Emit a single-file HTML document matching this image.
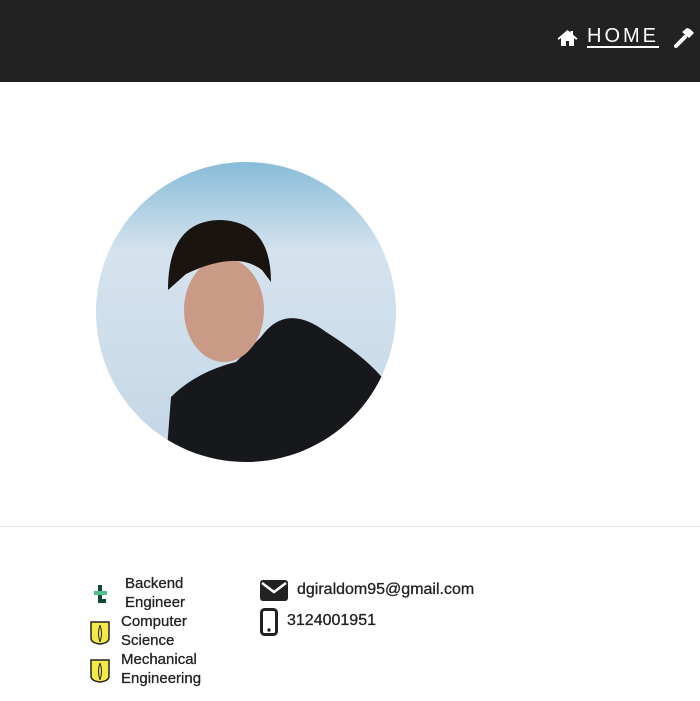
<!DOCTYPE html>
<html><head><style>
body{margin:0;width:700px;height:701px;background:#fff;font-family:"Liberation Sans",sans-serif;position:relative;overflow:hidden}
.nav{position:absolute;left:0;top:0;width:700px;height:82px;background:#222}
.home{position:absolute;left:587px;top:25px;color:#fff;font-size:20px;letter-spacing:3px;text-decoration:underline;text-underline-offset:4px}
.hr{position:absolute;left:0;top:526px;width:700px;border-top:1px solid #e2e2e2}
.t{position:absolute;font-size:15px;color:#222;line-height:19px;-webkit-text-stroke:0.3px #222}
</style></head><body>
<div class="nav">
<svg style="position:absolute;left:557px;top:29px" width="21" height="18" viewBox="0 0 21 18"><path d="M10.5 1L0.5 9.5l1.3 1.4L4 9V17h5v-5h3v5h5V9l2.2 1.9 1.3-1.4L16 5.6V2h-2.5v1.5z" fill="#fff"/></svg>
<div class="home">HOME</div>
<svg style="position:absolute;left:673px;top:27px" width="22" height="22" viewBox="0 0 22 22"><path d="M3 19l9-9" stroke="#fff" stroke-width="4" stroke-linecap="round"/><path d="M9 5l5-4 3 1 4 4-5 5z" fill="#fff"/></svg>
</div>
<svg style="position:absolute;left:96px;top:162px" width="300" height="300" viewBox="0 0 300 300">
<defs><clipPath id="c"><circle cx="150" cy="150" r="150"/></clipPath>
<linearGradient id="g" x1="0" y1="0" x2="0" y2="1"><stop offset="0" stop-color="#88bcd8"/><stop offset=".3" stop-color="#d5e3ee"/><stop offset="1" stop-color="#c3d6e6"/></linearGradient></defs>
<g clip-path="url(#c)">
<rect width="300" height="300" fill="url(#g)"/>
<path d="M70 300 L75 235 Q100 210 140 200 L165 175 Q190 140 230 170 Q270 195 290 220 L300 300z" fill="#16181c"/>
<ellipse cx="128" cy="148" rx="40" ry="52" fill="#c99a85"/>
<path d="M72 128 Q72 58 125 58 Q175 60 175 120 L166 108 Q140 88 90 112 z" fill="#1a1410"/>
</g></svg>
<div class="hr"></div>
<svg style="position:absolute;left:94px;top:585px" width="14" height="20" viewBox="0 0 14 20"><rect x="4" y="0" width="4" height="18" fill="#0b4a3b"/><rect x="0" y="6" width="13" height="4" fill="#4fc08d"/><path d="M4 14h8v4H8z" fill="#0b4a3b"/></svg>
<div class="t" style="left:125px;top:574px">Backend<br>Engineer</div>
<svg style="position:absolute;left:90px;top:620px" width="20" height="25" viewBox="0 0 20 25"><path d="M1 2h18v16q0 5-9 6q-9-1-9-6z" fill="#f5e94a" stroke="#222" stroke-width="1.5"/><path d="M10 5q-3 8 0 17M10 5q3 8 0 17" stroke="#222" fill="none"/></svg>
<div class="t" style="left:121px;top:612px">Computer<br>Science</div>
<svg style="position:absolute;left:90px;top:658px" width="20" height="25" viewBox="0 0 20 25"><path d="M1 2h18v16q0 5-9 6q-9-1-9-6z" fill="#f5e94a" stroke="#222" stroke-width="1.5"/><path d="M10 5q-3 8 0 17M10 5q3 8 0 17" stroke="#222" fill="none"/></svg>
<div class="t" style="left:121px;top:650px">Mechanical<br>Engineering</div>
<svg style="position:absolute;left:260px;top:580px" width="28" height="22" viewBox="0 0 28 22"><rect x="0" y="0" width="28" height="21" rx="3" fill="#222"/><path d="M2 3l12 9 12-9" stroke="#fff" stroke-width="2.5" fill="none"/></svg>
<div class="t" style="left:297px;top:580px;font-size:16px">dgiraldom95@gmail.com</div>
<svg style="position:absolute;left:260px;top:608px" width="18" height="28" viewBox="0 0 18 28"><rect x="1.5" y="1.5" width="15" height="25" rx="3" fill="none" stroke="#222" stroke-width="3"/><circle cx="9" cy="22" r="1.7" fill="#222"/></svg>
<div class="t" style="left:287px;top:611px;font-size:16px">3124001951</div>
</body></html>
